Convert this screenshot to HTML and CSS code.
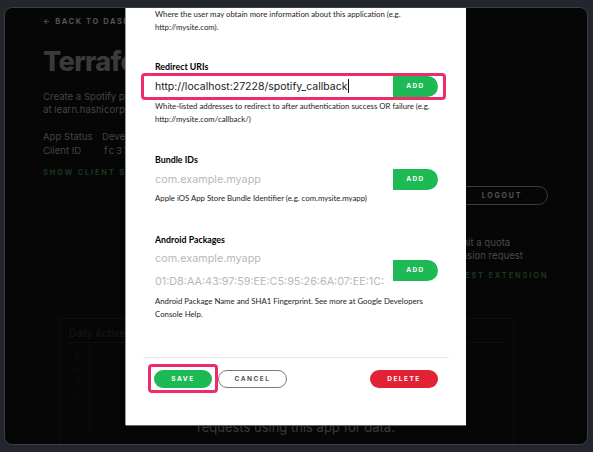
FILE: index.html
```html
<!DOCTYPE html>
<html>
<head>
<meta charset="utf-8">
<link rel="stylesheet" href="styles.css">
</head>
<body>
<div class="frame">
  <div class="page">
    <div class="cols">
      <div class="left">
        <div class="back">← BACK TO DASH</div>
        <h1 class="title">Terrafo</h1>
        <p class="desc">Create a Spotify pl<br>at learn.hashicorp.c</p>
        <div class="meta">
          <div class="meta-row"><span class="meta-k">App Status</span><span class="meta-v">Devel</span></div>
          <div class="meta-row"><span class="meta-k">Client ID</span><span class="meta-v mono">fc37c</span></div>
        </div>
        <div class="secret">SHOW CLIENT SE</div>
      </div>
      <div class="spacer"></div>
      <div class="right">
        <div class="logout">LOGOUT</div>
        <p class="quota">Submit a quota<br>extension request</p>
        <div class="request">REQUEST EXTENSION</div>
      </div>
    </div>
    <div class="chart">
      <div class="chart-title">Daily Active Users</div>
      <div class="chart-body">
        <div class="axis">
          <span>5</span><span>4</span><span>3</span><span>2</span><span>1</span>
        </div>
        <p class="chart-msg">requests using this app for data.</p>
      </div>
    </div>
  </div>

  <div class="modal">
    <div class="body">
      <p class="help">Where the user may obtain more information about this application (e.g.<br>http://mysite.com).</p>

      <h3 class="label first">Redirect URIs</h3>
      <div class="row highlight">
        <div class="inputs">
          <div class="field filled">http://localhost:27228/spotify_callback<span class="caret"></span></div>
        </div>
        <div class="add">ADD</div>
      </div>
      <p class="help gap2">White-listed addresses to redirect to after authentication success OR failure (e.g.<br>http://mysite.com/callback/)</p>

      <h3 class="label">Bundle IDs</h3>
      <div class="row">
        <div class="inputs">
          <div class="field">com.example.myapp</div>
        </div>
        <div class="add">ADD</div>
      </div>
      <p class="help gap1">Apple iOS App Store Bundle Identifier (e.g. com.mysite.myapp)</p>

      <h3 class="label android">Android Packages</h3>
      <div class="row multi">
        <div class="inputs">
          <div class="field">com.example.myapp</div>
          <div class="field">01:D8:AA:43:97:59:EE:C5:95:26:6A:07:EE:1C:</div>
        </div>
        <div class="add">ADD</div>
      </div>
      <p class="help gap2">Android Package Name and SHA1 Fingerprint. See more at Google Developers<br>Console Help.</p>
    </div>

    <div class="divider"></div>

    <div class="footer">
      <div class="save-wrap"><div class="btn save">SAVE</div></div>
      <div class="btn cancel">CANCEL</div>
      <div class="btn delete">DELETE</div>
    </div>
  </div>
</div>
</body>
</html>
```

FILE: styles.css
```css
html, body {
  margin: 0;
  padding: 0;
}
body {
  background: #23262d;
  width: 593px;
  height: 452px;
  overflow: hidden;
  font-family: "Inter", "Liberation Sans", sans-serif;
}
.frame {
  position: relative;
  margin: 7px 5px 0 4px;
  height: 436px;
  background: #060606;
  border: 1px solid #3a3d44;
  border-radius: 8px;
  overflow: hidden;
}

/* dimmed page behind the modal */
.page {
  padding: 0 39px 0 38px;
}
.cols {
  display: grid;
  grid-template-columns: 83px 1fr 106px;
}
.left {
  white-space: nowrap;
}
.back {
  margin-top: 9px;
  font-size: 7.5px;
  font-weight: 700;
  letter-spacing: 1.6px;
  color: #545454;
  line-height: 10px;
}
.title {
  margin: 20px 0 0;
  font-size: 27px;
  font-weight: 800;
  letter-spacing: -0.6px;
  color: #3a3a3a;
  line-height: 30px;
}
.desc {
  margin: 13px 0 0;
  font-size: 9.6px;
  line-height: 13px;
  color: #444;
}
.meta {
  margin-top: 14px;
  font-size: 9.6px;
  line-height: 14px;
  color: #444;
}
.meta-row {
  display: flex;
}
.meta-k {
  flex: none;
  width: 59px;
}
.mono {
  letter-spacing: 1.6px;
  margin-left: 2px;
}
.secret {
  margin-top: 10px;
  font-size: 7.5px;
  font-weight: 700;
  letter-spacing: 1.8px;
  color: #17381f;
}
.right {
  display: flex;
  flex-direction: column;
  align-items: flex-start;
}
.logout {
  align-self: flex-end;
  margin-top: 178px;
  width: 90px;
  height: 17px;
  border: 1px solid #3c3c3c;
  border-radius: 10px;
  font-size: 7px;
  font-weight: 700;
  letter-spacing: 1.8px;
  color: #555;
  display: flex;
  align-items: center;
  justify-content: center;
}
.quota {
  margin: 31px 0 0;
  font-size: 9.6px;
  line-height: 13px;
  color: #4a4a4a;
  white-space: nowrap;
}
.request {
  margin-top: 9px;
  margin-left: -5px;
  font-size: 7.5px;
  font-weight: 700;
  letter-spacing: 1.8px;
  color: #17381f;
  white-space: nowrap;
}
.chart {
  margin: 38px 34px 0 16px;
  border: 1px solid #0e0e0e;
  height: 160px;
  padding: 8px 9px;
}
.chart-title {
  font-size: 10px;
  color: #181818;
  padding-bottom: 3px;
  border-bottom: 1px solid #0e0e0e;
}
.chart-body {
  display: flex;
  position: relative;
}
.axis {
  display: flex;
  flex-direction: column;
  gap: 4px;
  padding: 8px 0 0 6px;
  font-size: 7px;
  color: #111;
  border-right: 1px solid #0e0e0e;
  width: 14px;
}
.chart-msg {
  margin: 76px 0 0 107px;
  font-size: 13px;
  color: #3a3a3a;
  white-space: nowrap;
}

/* modal */
.modal {
  position: absolute;
  left: 121px;
  top: 0;
  width: 340px;
  height: 417px;
  background: #fff;
  box-shadow: -1px 0 0 #9a9a9a, 0 1px 0 #666;
  padding: 0 17px;
  box-sizing: border-box;
}
.body {
  padding: 0 11px 0 12px;
}
.help {
  margin: 0;
  font-family: "Lato", "Liberation Sans", sans-serif;
  font-size: 7.8px;
  line-height: 13px;
  color: #1e1e1e;
  white-space: nowrap;
}
.gap1 { margin-top: 1px; }
.gap2 { margin-top: 2px; }
.label {
  margin: 28px 0 0;
  font-family: "Lato", "Liberation Sans", sans-serif;
  font-size: 8.8px;
  font-weight: 700;
  line-height: 12px;
  color: #000;
}
.label.first { margin-top: 27px; }
.label.android { margin-top: 29px; }
.row {
  display: flex;
  align-items: center;
  margin-top: 1px;
  position: relative;
}
.inputs {
  flex: 1;
  display: flex;
  flex-direction: column;
}
.field {
  height: 24px;
  display: flex;
  align-items: center;
  font-size: 10.8px;
  color: #b8b8b8;
  white-space: nowrap;
}
.multi .field {
  height: 23px;
}
.field.filled {
  font-size: 10.5px;
  color: #1a1a1a;
}
.caret {
  display: inline-block;
  width: 1px;
  height: 14px;
  background: #111;
  margin-left: 1px;
}
.add {
  width: 45px;
  height: 21px;
  background: #1db954;
  border-radius: 0 11px 11px 0;
  color: #fff;
  font-size: 6.5px;
  font-weight: 700;
  letter-spacing: 1.4px;
  display: flex;
  align-items: center;
  justify-content: center;
}
.highlight::after {
  content: "";
  position: absolute;
  left: -14px;
  right: -8px;
  top: -1px;
  bottom: -2px;
  border: 3px solid #ee2c6c;
  border-radius: 4px;
}
.divider {
  margin-top: 36px;
  height: 1px;
  background: #e6e6e6;
}
.footer {
  display: flex;
  align-items: center;
  margin-top: 12px;
  padding: 0 11px;
}
.btn {
  height: 18px;
  border-radius: 10px;
  font-size: 6.5px;
  font-weight: 700;
  letter-spacing: 1.5px;
  display: flex;
  align-items: center;
  justify-content: center;
  box-sizing: border-box;
}
.save-wrap {
  position: relative;
}
.save-wrap::after {
  content: "";
  position: absolute;
  left: -6px;
  right: -6px;
  top: -6px;
  bottom: -5px;
  border: 3px solid #ee2c6c;
  border-radius: 4px;
}
.save {
  width: 58px;
  background: #1db954;
  color: #fff;
}
.cancel {
  width: 69px;
  margin-left: 6px;
  border: 1.5px solid #7a7a7a;
  color: #555;
}
.delete {
  width: 68px;
  margin-left: auto;
  background: #e22134;
  color: #fff;
}
```
